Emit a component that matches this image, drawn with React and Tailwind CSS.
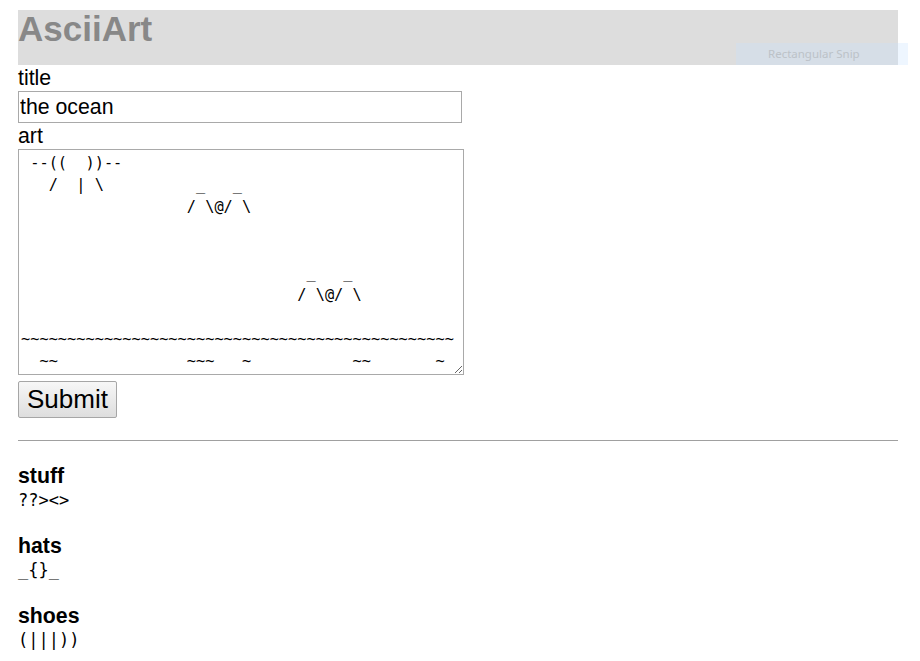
import React from 'react';

const art = [
  ' --((  ))--',
  '   /  | \\          _   _',
  '                  / \\@/ \\',
  '',
  '',
  '                               _   _',
  '                              / \\@/ \\',
  '',
  '~'.repeat(47),
  '  ~~              ~~~   ~           ~~       ~',
].join('\n');

const items = [
  { name: 'stuff', art: '??><>' },
  { name: 'hats', art: '_{}_' },
  { name: 'shoes', art: '(|||))' },
];

const sans = 'font-["Liberation_Sans",Arial,sans-serif]';
const mono = 'font-["DejaVu_Sans_Mono","Liberation_Mono",monospace]';

export default function App() {
  return (
    <div className={`relative min-h-[661px] bg-white pt-[10px] pl-[18px] pr-[22px] text-black ${sans}`}>
      {/* page header */}
      <div className="h-[55px] bg-[#dddddd]">
        <h1 className="text-[35px] leading-[37px] font-bold text-[#888888]">AsciiArt</h1>
      </div>

      {/* snipping tool leftover lying over the header */}
      <div className="absolute left-[736px] top-[43px] flex h-[22px] w-[172px] items-center pl-[32px] bg-[#c8e1ff]/30">
        <span className="text-[11.5px] text-[#bcc2c8] font-['Noto_Sans',sans-serif]">Rectangular Snip</span>
      </div>

      <form className="flex flex-col items-start" onSubmit={(e) => e.preventDefault()}>
        <label className="block h-[26px] text-[21.3px] leading-[26px]">title</label>
        <input
          defaultValue="the ocean"
          className="h-[32px] w-[444px] border border-[#a9a9a9] bg-white px-[1px] text-[21.3px] leading-[30px] outline-none"
        />
        <label className="block h-[26px] text-[21.3px] leading-[26px]">art</label>
        <textarea
          defaultValue={art}
          spellCheck={false}
          className={`h-[226px] w-[446px] overflow-hidden border border-[#a9a9a9] bg-white p-[2px] text-[15.3px] leading-[22px] whitespace-pre outline-none ${mono}`}
        />
        <button
          type="submit"
          className="mt-[6px] h-[37px] w-[99px] rounded-[2px] border border-[#a6a6a6] bg-gradient-to-b from-[#f7f7f7] to-[#dedede] text-[26px] leading-[29px]"
        >
          Submit
        </button>
      </form>

      <hr className="mt-[22px] border-0 border-t border-[#a0a0a0]" />

      <div className="mt-[22px] flex flex-col gap-[22px]">
        {items.map((item) => (
          <div key={item.name}>
            <div className="text-[21.3px] leading-[26px] font-bold">{item.name}</div>
            <pre className={`text-[17px] leading-[22px] ${mono}`}>{item.art}</pre>
          </div>
        ))}
      </div>
    </div>
  );
}
